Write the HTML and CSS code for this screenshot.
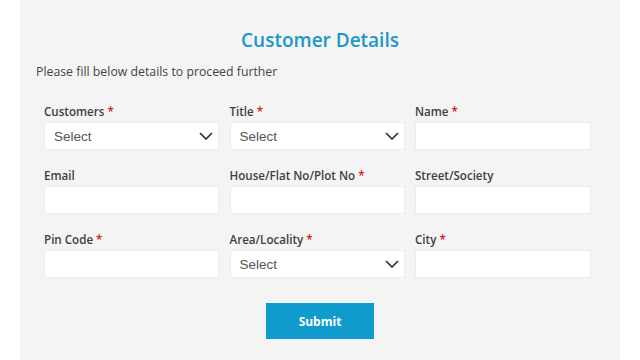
FILE: index.html
```html
<!DOCTYPE html>
<html>
<head>
<meta charset="utf-8">
<link rel="stylesheet" href="styles.css">
</head>
<body>
<div class="panel">
  <h1 class="title">Customer Details</h1>
  <p class="intro">Please fill below details to proceed further</p>
  <form class="form">
    <div class="grid">
      <div class="field">
        <label class="label">Customers <span class="req">*</span></label>
        <div class="box select"><span>Select</span><svg class="chev" viewBox="0 0 14 8" width="14" height="8"><path d="M1 1l6 6 6-6" fill="none" stroke="#333" stroke-width="1.7"/></svg></div>
      </div>
      <div class="field">
        <label class="label">Title <span class="req">*</span></label>
        <div class="box select"><span>Select</span><svg class="chev" viewBox="0 0 14 8" width="14" height="8"><path d="M1 1l6 6 6-6" fill="none" stroke="#333" stroke-width="1.7"/></svg></div>
      </div>
      <div class="field">
        <label class="label">Name <span class="req">*</span></label>
        <div class="box"></div>
      </div>
      <div class="field">
        <label class="label">Email</label>
        <div class="box"></div>
      </div>
      <div class="field">
        <label class="label">House/Flat No/Plot No <span class="req">*</span></label>
        <div class="box"></div>
      </div>
      <div class="field">
        <label class="label">Street/Society</label>
        <div class="box"></div>
      </div>
      <div class="field">
        <label class="label">Pin Code <span class="req">*</span></label>
        <div class="box"></div>
      </div>
      <div class="field">
        <label class="label">Area/Locality <span class="req">*</span></label>
        <div class="box select"><span>Select</span><svg class="chev" viewBox="0 0 14 8" width="14" height="8"><path d="M1 1l6 6 6-6" fill="none" stroke="#333" stroke-width="1.7"/></svg></div>
      </div>
      <div class="field">
        <label class="label">City <span class="req">*</span></label>
        <div class="box"></div>
      </div>
    </div>
    <div class="actions"><button type="button" class="submit">Submit</button></div>
  </form>
</div>
</body>
</html>
```
FILE: styles.css
```css
html, body {
  margin: 0;
  padding: 0;
  background: #ffffff;
}
body {
  font-family: "Open Sans", "Noto Sans", sans-serif;
  width: 640px;
  height: 360px;
  overflow: hidden;
}
.panel {
  margin: 0 20px;
  height: 360px;
  background: #f4f4f4;
  padding: 26px 16px 0 16px;
  box-sizing: border-box;
}
.title {
  margin: 0;
  text-align: center;
  font-size: 19px;
  line-height: 28px;
  font-weight: 600;
  color: #1a98c9;
}
.intro {
  margin: 10px 0 0 0;
  font-size: 12.3px;
  line-height: 16px;
  color: #444;
}
.form {
  margin: 24px 0 0 8px;
}
.grid {
  display: grid;
  grid-template-columns: 175px 175px 176px;
  column-gap: 10.5px;
  row-gap: 18px;
}
.field {
  display: flex;
  flex-direction: column;
  gap: 2px;
}
.label {
  font-size: 11.6px;
  line-height: 16px;
  font-weight: 600;
  color: #3e3e3e;
}
.req {
  color: #d0202a;
}
.box {
  height: 28px;
  background: #ffffff;
  border: 1px solid #ececec;
  box-sizing: border-box;
}
.select {
  display: flex;
  align-items: center;
  justify-content: space-between;
  padding: 0 5px 0 9px;
  font-family: "Liberation Sans", Arial, sans-serif;
  font-size: 13.5px;
  color: #555;
}
.chev {
  display: block;
}
.actions {
  display: flex;
  justify-content: center;
  margin-top: 25px;
  margin-left: -8px;
}
.submit {
  width: 108px;
  height: 36px;
  border: none;
  background: #0f9ccd;
  color: #ffffff;
  font-family: "Open Sans", sans-serif;
  font-weight: 700;
  font-size: 12px;
  cursor: pointer;
}
```
